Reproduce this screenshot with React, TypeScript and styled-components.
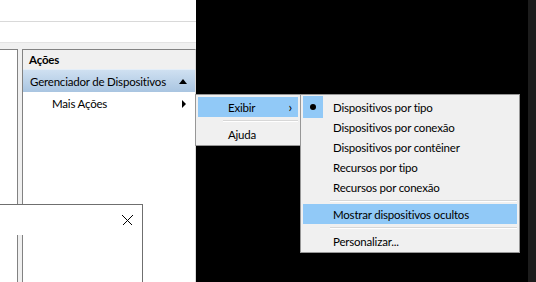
import styled, { createGlobalStyle } from "styled-components";

const GlobalStyle = createGlobalStyle`
    html, body {
        margin: 0;
        padding: 0;
        background: #000;
    }
    body {
        font-family: Lato, "Noto Sans", sans-serif;
        font-size: 11.5px;
        letter-spacing: -0.2px;
        color: #000;
    }
`;

const viewItems = [
    "Dispositivos por tipo",
    "Dispositivos por conexão",
    "Dispositivos por contêiner",
    "Recursos por tipo",
    "Recursos por conexão",
];

export default function App() {
    return (
        <>
            <GlobalStyle />
            <Screen>
                <MmcWindow>
                    <TitleStrip />
                    <ToolStrip />
                    <Panes>
                        <TreePane />
                        <ActionsPane>
                            <PaneHeader>Ações</PaneHeader>
                            <GroupBar>
                                <span>Gerenciador de Dispositivos</span>
                                <UpArrow />
                            </GroupBar>
                            <ActionRow>
                                <span>Mais Ações</span>
                                <RightArrow />
                            </ActionRow>
                        </ActionsPane>
                    </Panes>
                </MmcWindow>
                <Desktop />
                <EdgeStrip />

                <Dialog>
                    <DialogTitle>
                        <CloseIcon width="11" height="11" viewBox="0 0 11 11">
                            <path d="M0.5 0.5 L10.5 10.5 M10.5 0.5 L0.5 10.5" stroke="#000" strokeWidth="1" />
                        </CloseIcon>
                    </DialogTitle>
                </Dialog>

                <FirstMenu>
                    <MenuItem $active $indent={30}>
                        <span>Exibir</span>
                        <Chevron>›</Chevron>
                    </MenuItem>
                    <Separator $inset={25} />
                    <MenuItem $indent={30}>
                        <span>Ajuda</span>
                    </MenuItem>
                </FirstMenu>

                <SecondMenu>
                    {viewItems.map((label, i) => (
                        <MenuItem key={label} $indent={0}>
                            <CheckCell $checked={i === 0}>{i === 0 && <Dot />}</CheckCell>
                            <span>{label}</span>
                        </MenuItem>
                    ))}
                    <Separator $inset={27} />
                    <MenuItem $active $indent={0}>
                        <CheckCell />
                        <span>Mostrar dispositivos ocultos</span>
                    </MenuItem>
                    <Separator $inset={27} />
                    <MenuItem $indent={0}>
                        <CheckCell />
                        <span>Personalizar...</span>
                    </MenuItem>
                </SecondMenu>
            </Screen>
        </>
    );
}

const Screen = styled.div`
    position: relative;
    display: flex;
    width: 536px;
    height: 282px;
    overflow: hidden;
    background: #000;
`;

const MmcWindow = styled.div`
    display: flex;
    flex-direction: column;
    width: 196px;
    height: 100%;
    background: #fff;
`;

const TitleStrip = styled.div`
    height: 21px;
    border-bottom: 1px solid #d9d9d9;
    background: #fff;
`;

const ToolStrip = styled.div`
    height: 20px;
    border-bottom: 1px solid #e3e3e3;
    background: #fff;
`;

const Panes = styled.div`
    flex: 1;
    display: flex;
    gap: 4px;
    padding-top: 6px;
    background: #f0f0f0;
`;

const TreePane = styled.div`
    width: 17px;
    background: #fff;
    border-top: 1px solid #828282;
    border-right: 1px solid #828282;
`;

const ActionsPane = styled.div`
    flex: 1;
    display: flex;
    flex-direction: column;
    background: #fff;
    border-top: 1px solid #828282;
    border-left: 1px solid #828282;
    border-right: 1px solid #d9d9d9;
`;

const PaneHeader = styled.div`
    height: 19px;
    padding-left: 6px;
    line-height: 19px;
    font-weight: bold;
    background: #f0f0f0;
`;

const GroupBar = styled.div`
    display: flex;
    align-items: center;
    justify-content: space-between;
    height: 23px;
    padding: 0 8px 0 7px;
    white-space: nowrap;
    background: linear-gradient(#cfe0f1, #a9c5e1);
    border-top: 1px solid #e4eef8;
    box-sizing: border-box;
`;

const ActionRow = styled.div`
    display: flex;
    align-items: center;
    justify-content: space-between;
    height: 23px;
    padding: 0 8px 0 29px;
    white-space: nowrap;
`;

const UpArrow = styled.div`
    width: 0;
    height: 0;
    border-left: 4px solid transparent;
    border-right: 4px solid transparent;
    border-bottom: 5px solid #000;
`;

const RightArrow = styled.div`
    width: 0;
    height: 0;
    margin-right: 1px;
    border-top: 4px solid transparent;
    border-bottom: 4px solid transparent;
    border-left: 4px solid #000;
`;

const Desktop = styled.div`
    flex: 1;
    background: #000;
`;

const EdgeStrip = styled.div`
    width: 8px;
    background: #1c1c1c;
`;

const Dialog = styled.div`
    position: absolute;
    left: -10px;
    top: 204px;
    width: 153px;
    height: 90px;
    border: 1px solid #6f6f6f;
    box-sizing: border-box;
`;

const DialogTitle = styled.div`
    display: flex;
    align-items: center;
    justify-content: flex-end;
    height: 30px;
    padding-right: 9px;
    background: #fff;
`;

const CloseIcon = styled.svg`
    display: block;
    shape-rendering: crispEdges;
`;

const Menu = styled.div`
    position: absolute;
    top: 94px;
    display: flex;
    flex-direction: column;
    padding: 2px 2px 1px;
    background: #f0f0f0;
    border: 1px solid #979797;
    box-sizing: border-box;
`;

const FirstMenu = styled(Menu)`
    left: 195px;
    width: 106px;
`;

const SecondMenu = styled(Menu)`
    left: 300px;
    width: 220px;
`;

const MenuItem = styled.div<{ $active?: boolean; $indent: number }>`
    display: flex;
    align-items: center;
    height: 20px;
    padding-left: ${(p) => p.$indent}px;
    white-space: nowrap;
    background: ${(p) => (p.$active ? "#91c9f7" : "transparent")};
`;

const Chevron = styled.span`
    margin-left: auto;
    margin-right: 6px;
    font-size: 13px;
`;

const Separator = styled.div<{ $inset: number }>`
    height: 7px;
    margin-left: ${(p) => p.$inset}px;
    background: linear-gradient(transparent 3px, #d7d7d7 3px, #d7d7d7 4px, #fff 4px, #fff 5px, transparent 5px);
`;

const CheckCell = styled.div<{ $checked?: boolean }>`
    display: flex;
    align-items: center;
    justify-content: center;
    width: 20px;
    height: 22px;
    margin: -1px 10px -1px 0;
    background: ${(p) => (p.$checked ? "#91c9f7" : "transparent")};
`;

const Dot = styled.div`
    width: 6px;
    height: 6px;
    border-radius: 50%;
    background: #000;
`;
